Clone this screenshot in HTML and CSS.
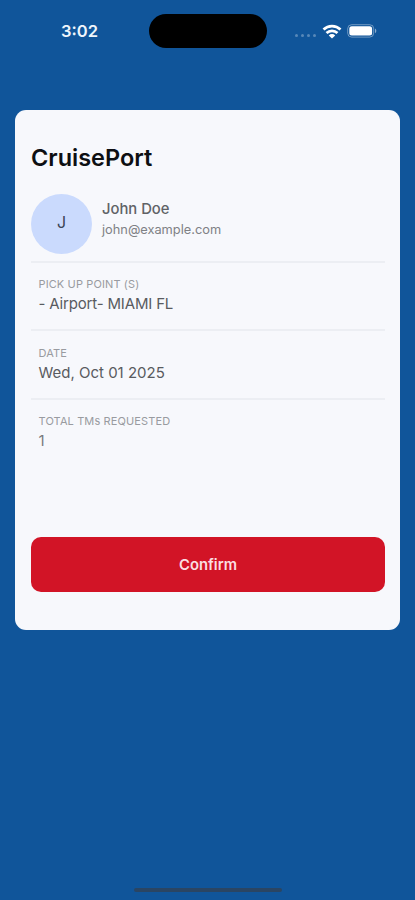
FILE: index.html
```html
<!DOCTYPE html>
<html lang="en">

<head>
  <meta charset="UTF-8">
  <meta name="viewport" content="width=device-width, initial-scale=1.0">
  <title>CruisePort</title>
  <link rel="stylesheet" href="styles.css">
</head>

<body>
  <header class="status-bar">
    <div class="time">3:02</div>
    <div class="island"></div>
    <div class="status-icons">
      <div class="signal"><i></i><i></i><i></i><i></i></div>
      <svg class="wifi" width="20" height="15" viewBox="0 0 20 15" fill="none" stroke="#fff" stroke-width="2.7">
        <path d="M1.5 5.6a12.3 12.3 0 0 1 17 0" />
        <path d="M4.5 9a8 8 0 0 1 11 0" />
        <path d="M10 14.5L6.8 11.4a4.5 4.5 0 0 1 6.4 0z" fill="#fff" stroke="none" />
      </svg>
      <svg class="battery" width="30" height="14" viewBox="0 0 30 14">
        <rect x="0.7" y="0.7" width="26" height="12.4" rx="4" fill="none" stroke="#fff" stroke-opacity="0.4" />
        <rect x="2.3" y="2.3" width="22.8" height="9.2" rx="2.5" fill="#fff" />
        <path d="M28 4.6c1.8.8 1.8 3.8 0 4.6z" fill="#fff" fill-opacity="0.5" />
      </svg>
    </div>
  </header>

  <main class="card">
    <h1 class="title">CruisePort</h1>
    <div class="user">
      <div class="avatar">J</div>
      <div>
        <div class="name">John Doe</div>
        <div class="email">john@example.com</div>
      </div>
    </div>
    <div class="row">
      <div class="label">PICK UP POINT (S)</div>
      <div class="value airport">- Airport- MIAMI FL</div>
    </div>
    <div class="row">
      <div class="label">DATE</div>
      <div class="value date">Wed, Oct 01 2025</div>
    </div>
    <div class="row">
      <div class="label">TOTAL TMs REQUESTED</div>
      <div class="value count">1</div>
    </div>
    <button class="confirm" type="button">Confirm</button>
  </main>

  <div class="home-bar"></div>
</body>

</html>
```

FILE: styles.css
```css
* {
  box-sizing: border-box;
}

body {
  margin: 0;
  height: 900px;
  display: flex;
  flex-direction: column;
  align-items: center;
  background: #10559a;
  font-family: Inter, "Liberation Sans", sans-serif;
  overflow: hidden;
}

.status-bar {
  width: 100%;
  height: 34px;
  margin-top: 14px;
  display: grid;
  grid-template-columns: 149px 118px 148px;
  align-items: center;
}

.time {
  padding-left: 61px;
  color: #eef5fc;
  font-size: 16.5px;
  font-weight: 600;
  line-height: 34px;
}

.island {
  height: 34px;
  border-radius: 17px;
  background: #000;
}

.status-icons {
  display: flex;
  align-items: center;
  padding-left: 28px;
}

.signal {
  display: flex;
  gap: 3px;
  padding-top: 9px;
  margin-right: 6px;
}

.signal i {
  width: 3px;
  height: 3px;
  border-radius: 50%;
  background: rgba(255, 255, 255, 0.3);
}

.battery {
  margin-left: 5px;
}

.card {
  width: 385px;
  height: 520px;
  margin-top: 62px;
  padding: 33px 15px 38px 16px;
  display: flex;
  flex-direction: column;
  border-radius: 11px;
  background: #f7f8fc;
}

.title {
  margin: 0 0 21px;
  color: #0d0f12;
  font-size: 23.5px;
  font-weight: 600;
  line-height: 30px;
}

.user {
  display: flex;
  gap: 10px;
  height: 68.5px;
  border-bottom: 2px solid #eceef3;
}

.avatar {
  width: 61px;
  height: 60px;
  border-radius: 50%;
  background: #cadafd;
  color: #3c4554;
  font-size: 16px;
  line-height: 56px;
  text-align: center;
}

.name {
  margin-top: 5px;
  color: #606266;
  font-size: 14.8px;
  font-weight: 500;
  line-height: 20px;
}

.email {
  color: #7f8185;
  font-size: 12.8px;
  line-height: 21px;
}

.row {
  height: 68.5px;
  padding: 13.5px 7.5px 0;
  border-bottom: 2px solid #eceef3;
}

.row:nth-of-type(4) {
  border-bottom: none;
}

.label {
  color: #999ba0;
  font-size: 11px;
  line-height: 16px;
  letter-spacing: 0.12px;
}

.value {
  color: #595b60;
  font-size: 15px;
  line-height: 23px;
}

.airport {
  letter-spacing: -0.17px;
}

.date {
  line-height: 24px;
}

.count {
  color: #77797e;
}

.confirm {
  height: 55px;
  margin-top: auto;
  border: none;
  border-radius: 10px;
  background: #d21426;
  color: #fbdfe2;
  font-family: inherit;
  font-size: 14.8px;
  font-weight: 600;
}

.home-bar {
  width: 148px;
  height: 4px;
  margin-top: auto;
  margin-bottom: 8px;
  border-radius: 2px;
  background: #2a4563;
}
```
